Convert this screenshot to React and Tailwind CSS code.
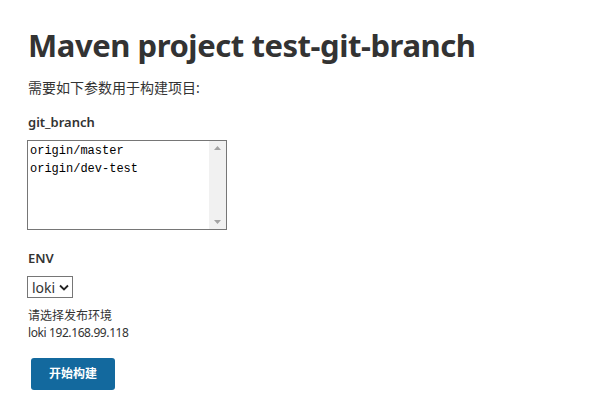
export default function App() {
  const sans = { fontFamily: '"Noto Sans", "Noto Sans CJK SC", sans-serif' };
  return (
    <div className="w-[593px] h-[415px] bg-white text-[#333] pl-[28px] pt-[25px]" style={sans}>
      <h1 className="text-[31px] font-bold leading-[40px] tracking-[-0.45px]">Maven project test-git-branch</h1>
      <p className="mt-[14px] text-[14px] leading-[18px]">需要如下参数用于构建项目:</p>
      <div className="mt-[16px] text-[13px] font-semibold leading-[18px]">git_branch</div>
      <div className="mt-[9px] ml-[-1px] w-[200px] h-[90px] border border-[#767676] flex">
        <div className="flex-1 pl-[2px] pt-[1px] text-[12px] leading-[18px] text-black" style={{ fontFamily: '"Liberation Mono", monospace' }}>
          <div>origin/master</div>
          <div>origin/dev-test</div>
        </div>
        <div className="w-[17px] h-full bg-[#f1f1f1] flex flex-col justify-between items-center py-[5px]">
          <svg width="7" height="4" viewBox="0 0 7 4"><path d="M0 4 L3.5 0 L7 4 Z" fill="#a3a3a3" /></svg>
          <svg width="7" height="4" viewBox="0 0 7 4"><path d="M0 0 L3.5 4 L7 0 Z" fill="#a3a3a3" /></svg>
        </div>
      </div>
      <div className="mt-[19px] text-[13px] font-semibold leading-[18px]">ENV</div>
      <div className="mt-[9px] ml-[-1px] w-[46px] h-[22px] border border-[#767676] flex items-center pl-[4px] gap-[4px] text-[14px]">
        <span>loki</span>
        <svg width="10" height="7" viewBox="0 0 10 7"><path d="M1 1.5 L5 5.5 L9 1.5" stroke="#222" strokeWidth="1.8" fill="none" /></svg>
      </div>
      <p className="mt-[9px] text-[12px] leading-[17px]">请选择发布环境</p>
      <p className="text-[12px] leading-[17px] tracking-[-0.4px]">loki 192.168.99.118</p>
      <button className="mt-[17px] ml-[3px] w-[84px] h-[32px] rounded-[3px] bg-[#13699e] text-white text-[12px] font-bold">开始构建</button>
    </div>
  );
}
